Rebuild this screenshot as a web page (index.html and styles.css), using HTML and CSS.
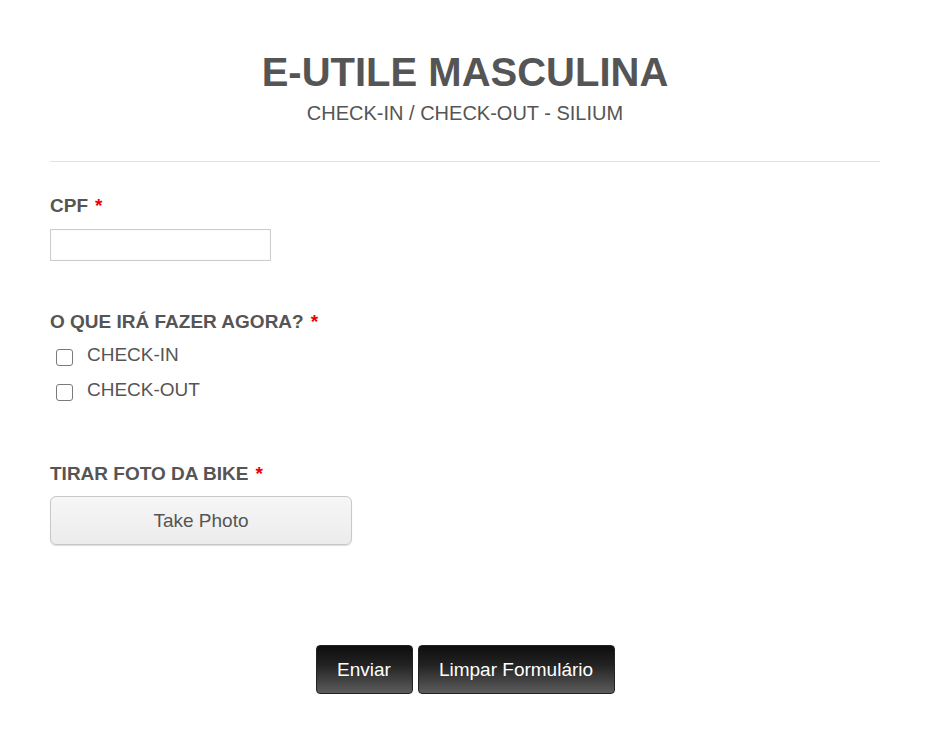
FILE: index.html
```html
<!DOCTYPE html>
<html lang="pt">
<head>
<meta charset="utf-8">
<link rel="stylesheet" href="styles.css">
</head>
<body>
<form class="form">
  <header class="header">
    <h1 class="title">E-UTILE MASCULINA</h1>
    <p class="subtitle">CHECK-IN / CHECK-OUT - SILIUM</p>
  </header>
  <div class="field field-cpf">
    <label class="label">CPF<span class="req">*</span></label>
    <input class="text-input" type="text">
  </div>
  <div class="field field-choice">
    <label class="label">O QUE IRÁ FAZER AGORA?<span class="req">*</span></label>
    <div class="options">
      <label class="option"><span class="box"></span><span class="opt-text">CHECK-IN</span></label>
      <label class="option"><span class="box"></span><span class="opt-text">CHECK-OUT</span></label>
    </div>
  </div>
  <div class="field field-photo">
    <label class="label">TIRAR FOTO DA BIKE<span class="req">*</span></label>
    <button type="button" class="photo-btn">Take Photo</button>
  </div>
  <div class="actions">
    <button type="button" class="dark-btn btn-send">Enviar</button>
    <button type="button" class="dark-btn btn-clear">Limpar Formulário</button>
  </div>
</form>
</body>
</html>
```
FILE: styles.css
```css
* { box-sizing: border-box; }
html, body { margin: 0; padding: 0; background: #fff; }
body {
  font-family: "Liberation Sans", Arial, sans-serif;
  color: #555;
}
.form {
  width: 830px;
  margin: 0 0 0 50px;
  padding-top: 48px;
}
.header {
  text-align: center;
  border-bottom: 1px solid #e3e3e3;
  padding-bottom: 36px;
}
.title {
  margin: 0;
  font-size: 40px;
  line-height: 48px;
  font-weight: bold;
  color: #555;
}
.subtitle {
  margin: 5px 0 0 0;
  font-size: 20px;
  line-height: 24px;
  color: #555;
}
.field { display: flex; flex-direction: column; align-items: flex-start; }
.label {
  font-size: 19px;
  font-weight: bold;
  line-height: 22px;
  color: #555;
}
.req { color: #e00; margin-left: 7px; }
.field-cpf { margin-top: 33px; }
.text-input {
  margin-top: 12px;
  width: 221px;
  height: 32px;
  border: 1px solid #ccc;
  box-shadow: inset 0 0 1px #ddd;
  font-size: 16px;
}
.field-choice { margin-top: 50px; }
.options { margin-top: 11px; display: flex; flex-direction: column; gap: 13px; }
.option { display: flex; align-items: center; font-size: 19px; line-height: 22px; color: #555; }
.box {
  width: 17px; height: 17px;
  border: 1px solid #7a7a7a;
  border-radius: 3px;
  margin: 4px 14px 0 6px;
  background: #fff;
}
.field-photo { margin-top: 62px; }
.photo-btn {
  margin-top: 11px;
  width: 302px;
  height: 49px;
  border: 1px solid #c8c8c8;
  border-radius: 6px;
  background: linear-gradient(#f6f6f6, #ececec);
  box-shadow: 0 1px 1px #ddd;
  font-family: "Liberation Sans", Arial, sans-serif;
  font-size: 19px;
  color: #555;
}
.actions {
  margin-top: 100px;
  display: flex;
  justify-content: center;
  gap: 5px;
}
.dark-btn {
  height: 49px;
  border: 1px solid #222;
  border-radius: 4px;
  background: linear-gradient(#0e0e0e 0%, #222 40%, #5c5c5c 100%);
  color: #fff;
  font-family: "Liberation Sans", Arial, sans-serif;
  font-size: 19px;
  padding: 0;
}
.btn-send { width: 97px; }
.btn-clear { width: 197px; }
```
